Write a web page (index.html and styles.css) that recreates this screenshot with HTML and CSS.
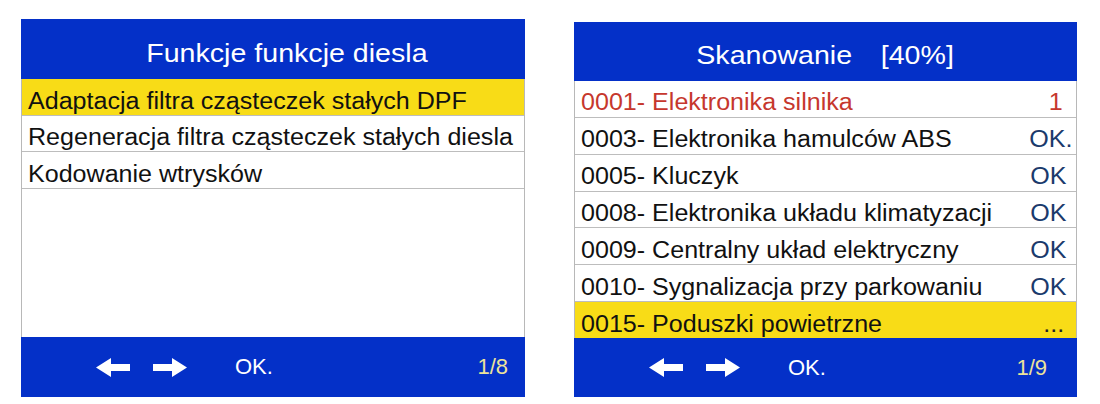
FILE: index.html
```html
<!DOCTYPE html>
<html lang="pl">
<head>
<meta charset="utf-8">
<title>Diagnostyka</title>
<link rel="stylesheet" href="styles.css">
</head>
<body>
<div class="screens">
  <section class="panel panel-left">
    <header class="title title-left"><span class="title-text">Funkcje funkcje diesla</span></header>
    <ul class="menu">
      <li class="row selected"><span class="name">Adaptacja filtra cząsteczek stałych DPF</span></li>
      <li class="row"><span class="name">Regeneracja filtra cząsteczek stałych diesla</span></li>
      <li class="row"><span class="name">Kodowanie wtrysków</span></li>
    </ul>
    <div class="filler"></div>
    <footer class="bar bar-left">
      <svg class="arrow" width="34" height="19" viewBox="0 0 34 19"><polygon points="0,9.5 15,0 15,6 34,6 34,13 15,13 15,19" fill="#fff"/></svg>
      <svg class="arrow arrow-r" width="34" height="19" viewBox="0 0 34 19"><polygon points="34,9.5 19,0 19,6 0,6 0,13 19,13 19,19" fill="#fff"/></svg>
      <span class="ok">OK.</span>
      <span class="page">1/8</span>
    </footer>
  </section>

  <section class="panel panel-right">
    <header class="title"><span class="title-text">Skanowanie<span class="pct">[40%]</span></span></header>
    <ul class="scan">
      <li class="row err"><span class="name">0001- Elektronika silnika</span><span class="val one">1</span></li>
      <li class="row"><span class="name">0003- Elektronika hamulców ABS</span><span class="val">OK<span class="dot">.</span></span></li>
      <li class="row"><span class="name">0005- Kluczyk</span><span class="val">OK</span></li>
      <li class="row"><span class="name">0008- Elektronika układu klimatyzacji</span><span class="val">OK</span></li>
      <li class="row"><span class="name">0009- Centralny układ elektryczny</span><span class="val">OK</span></li>
      <li class="row"><span class="name">0010- Sygnalizacja przy parkowaniu</span><span class="val">OK</span></li>
      <li class="row selected last"><span class="name">0015- Poduszki powietrzne</span><span class="val dots">...</span></li>
    </ul>
    <footer class="bar bar-right">
      <svg class="arrow" width="34" height="19" viewBox="0 0 34 19"><polygon points="0,9.5 15,0 15,6 34,6 34,13 15,13 15,19" fill="#fff"/></svg>
      <svg class="arrow arrow-r" width="34" height="19" viewBox="0 0 34 19"><polygon points="34,9.5 19,0 19,6 0,6 0,13 19,13 19,19" fill="#fff"/></svg>
      <span class="ok">OK.</span>
      <span class="page">1/9</span>
    </footer>
  </section>
</div>
</body>
</html>
```
FILE: styles.css
```css
* { box-sizing: border-box; }
html, body { margin: 0; padding: 0; background: #fff; }
body {
  font-family: "Liberation Sans", Arial, sans-serif;
  width: 1100px;
  height: 404px;
  overflow: hidden;
}
.screens {
  display: flex;
  align-items: flex-start;
  gap: 49px;
  padding: 19px 0 0 21px;
}
.panel {
  display: flex;
  flex-direction: column;
  width: 504px;
  border-left: 1px solid #b8b8b8;
  border-right: 1px solid #b8b8b8;
  background: #fff;
}
.panel-left { height: 378px; }
.panel-right { height: 375px; width: 503px; margin-top: 3px; }

.title {
  background: #0430c8;
  color: #fff;
  font-size: 26px;
  height: 60px;
  padding-top: 8px;
  display: flex;
  align-items: center;
  justify-content: center;
  margin: 0 -1px;
}
.title-text {
  display: inline-block;
  transform: scaleX(1.1);
  white-space: nowrap;
}
.panel-right .title { height: 59px; }
.title-left { padding-left: 28px; }
.pct { margin-left: 26px; }

.menu, .scan {
  list-style: none;
  margin: 0;
  padding: 0;
}
.row {
  display: flex;
  align-items: center;
  font-size: 23px;
  color: #111;
  padding: 8px 0 0 6px;
  border-bottom: 1px solid #bdbdbd;
  white-space: nowrap;
}
.menu .row { height: 37px; }
.menu .row:nth-child(2) { height: 36px; }
.scan {
  flex: 1;
  display: flex;
  flex-direction: column;
}
.scan .row { flex: 1; }
.row.selected { background: #f8dc17; }
.row.last { border-bottom: none; }
.row.err { color: #c6372d; }
.name {
  flex: 1;
  display: inline-block;
  transform: scaleX(1.09);
  transform-origin: left center;
}
.val {
  display: inline-block;
  transform: scaleX(1.09);
  transform-origin: right center;
  color: #1b3a6c;
  padding-right: 9px;
}
.err .val { color: #c6372d; }
.val.one { padding-right: 12px; }
.val.dots { color: #222; padding-right: 11px; }
.dot { margin-right: -6px; }

.filler { flex: 1; }

.bar {
  background: #0430c8;
  height: 60px;
  display: flex;
  align-items: center;
  padding-left: 75px;
  color: #fff;
  font-size: 22px;
  margin: 0 -1px;
}
.panel-right .bar { height: 59px; }
.arrow { display: block; flex: none; }
.arrow-r { margin-left: 23px; }
.ok { margin-left: 48px; }
.page { margin-left: auto; color: #ece39a; }
.bar-left { padding-right: 17px; }
.bar-right { padding-right: 30px; }
```
